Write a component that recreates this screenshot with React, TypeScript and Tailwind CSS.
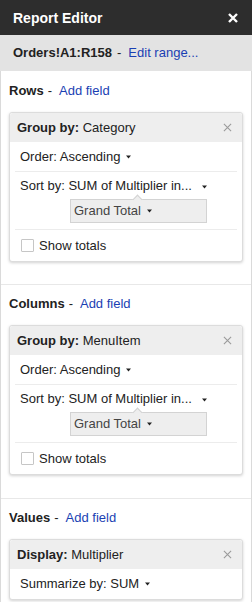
import React from "react";

function Caret() {
  return (
    <svg className="ml-[6px] inline-block h-[4px] w-[5px] shrink-0" viewBox="0 0 5 4" fill="#222">
      <polygon points="0,0.5 5,0.5 2.5,3.5" />
    </svg>
  );
}

function CloseX({ className, stroke, width }: { className: string; stroke: string; width: number }) {
  return (
    <svg className={className} viewBox="0 0 10 10" fill="none" stroke={stroke} strokeWidth={width}>
      <path d="M1 1 L9 9 M9 1 L1 9" />
    </svg>
  );
}

function SectionTitle({ label }: { label: string }) {
  return (
    <div className="flex h-[16px] items-center leading-[16px]">
      <span className="font-bold text-[#222]">{label}</span>
      <span className="ml-[4px] text-[#222]">-</span>
      <span className="ml-[7px] text-[#1a3fb3]">Add field</span>
    </div>
  );
}

function CardHeader({ label, value }: { label: string; value: string }) {
  return (
    <div className="flex h-[29px] items-center justify-between rounded-t-[3px] bg-[#eeeeee] pl-[7px] pr-[10px]">
      <span>
        <span className="font-bold">{label}</span> {value}
      </span>
      <CloseX className="h-[9px] w-[9px]" stroke="#9a9a9a" width={1.2} />
    </div>
  );
}

function GroupCard({ value }: { value: string }) {
  return (
    <div className="mt-[13px] rounded-[3px] border border-[#dcdcdc] bg-white shadow-[0_1px_3px_rgba(0,0,0,0.18)]">
      <CardHeader label="Group by:" value={value} />
      <div className="mx-[5px] flex h-[30px] items-center border-b border-[#ececec] px-[5px]">
        Order: Ascending
        <Caret />
      </div>
      <div className="mx-[5px] h-[58px] border-b border-[#ececec] px-[5px] pt-[6px]">
        <div className="flex h-[16px] items-center">
          <span className="whitespace-nowrap">Sort by: SUM of Multiplier in...</span>
          <span className="ml-[4px]">
            <Caret />
          </span>
        </div>
        <div className="relative ml-[50px] mt-[5px] flex h-[24px] w-[137px] items-center border border-[#d3d3d3] bg-[#eeeeee] px-[3px] text-[#444]">
          <span className="absolute left-[63px] top-[-4px] h-[7px] w-[7px] rotate-45 border-l border-t border-[#d3d3d3] bg-[#eeeeee]" />
          Grand Total
          <Caret />
        </div>
      </div>
      <div className="mx-[5px] flex h-[31px] items-center px-[6px]">
        <span className="h-[13px] w-[13px] rounded-[1px] border border-[#c6c6c6] bg-white" />
        <span className="ml-[5px]">Show totals</span>
      </div>
    </div>
  );
}

export default function App() {
  return (
    <div className="h-[602px] w-[252px] overflow-hidden bg-white font-['Liberation_Sans',Arial,sans-serif] text-[13px] leading-[16px] text-[#222]">
      {/* Title bar */}
      <div className="flex h-[35px] items-center justify-between bg-[#2d2d2d] pl-[13px] pr-[14px]">
        <span className="text-[14px] font-bold text-white">Report Editor</span>
        <CloseX className="h-[10px] w-[10px]" stroke="#ffffff" width={2.4} />
      </div>

      {/* Range bar */}
      <div className="flex h-[36px] items-center bg-[#e3e3e3] px-[13px]">
        <span className="font-bold">Orders!A1:R158</span>
        <span className="ml-[5px]">-</span>
        <span className="ml-[7px] text-[#1a3fb3]">Edit range...</span>
      </div>

      <div className="flex h-[531px] flex-col border-x border-[#dadada]">
        {/* Rows */}
        <div className="border-b border-[#e8e8e8] px-[8px] pb-[22px] pt-[12px]">
          <SectionTitle label="Rows" />
          <GroupCard value="Category" />
        </div>

        {/* Columns */}
        <div className="border-b border-[#e8e8e8] px-[8px] pb-[23px] pt-[11px]">
          <SectionTitle label="Columns" />
          <GroupCard value="MenuItem" />
        </div>

        {/* Values */}
        <div className="px-[8px] pt-[11px]">
          <SectionTitle label="Values" />
          <div className="mt-[13px] rounded-[3px] border border-[#dcdcdc] bg-white shadow-[0_1px_3px_rgba(0,0,0,0.18)]">
            <CardHeader label="Display:" value="Multiplier" />
            <div className="mx-[5px] flex h-[30px] items-center px-[5px]">
              Summarize by: SUM
              <Caret />
            </div>
          </div>
        </div>
      </div>
    </div>
  );
}
